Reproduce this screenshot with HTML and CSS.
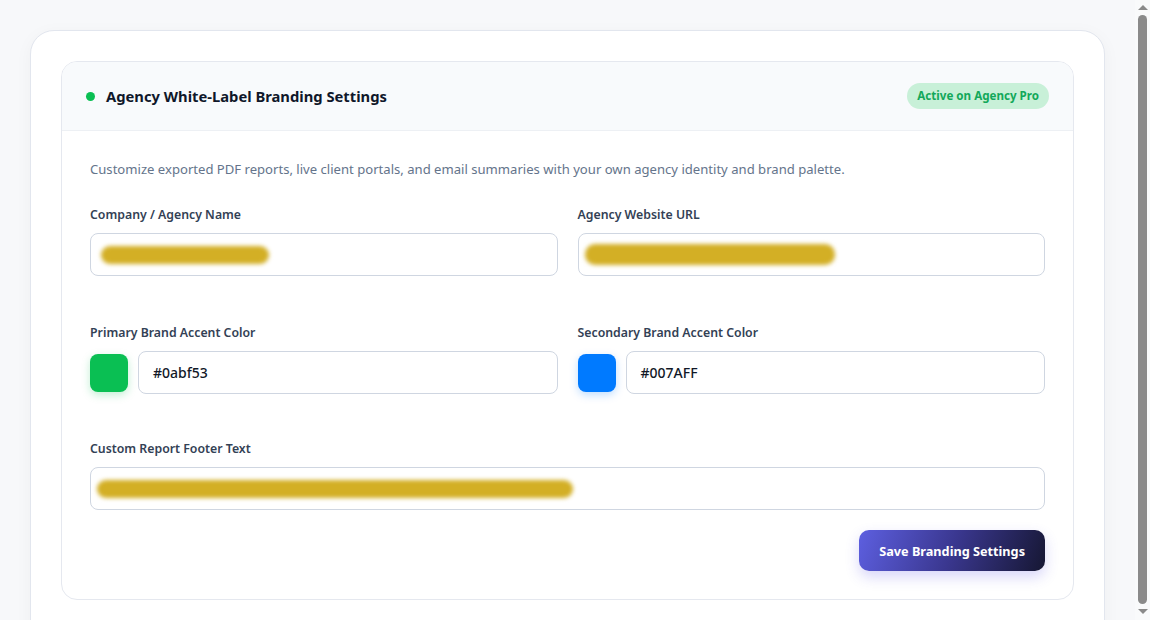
FILE: index.html
```html
<!DOCTYPE html>
<html lang="en">
<head>
    <meta charset="UTF-8">
    <meta name="viewport" content="width=device-width, initial-scale=1.0">
    <title>Agency Branding</title>
    <link rel="stylesheet" href="styles.css">
</head>
<body>
    <div class="page">
        <div class="panel">
            <div class="brandCard">
                <div class="cardHead">
                    <div class="headTitle">
                        <span class="dot"></span>
                        Agency White-Label Branding Settings
                    </div>
                    <span class="badge">Active on Agency Pro</span>
                </div>
                <div class="cardBody">
                    <p class="intro">Customize exported PDF reports, live client portals, and email summaries with your own agency identity and brand palette.</p>

                    <div class="grid">
                        <div class="field">
                            <label>Company / Agency Name</label>
                            <div class="inputBox"><span class="redact" style="width: 168px"></span></div>
                        </div>
                        <div class="field">
                            <label>Agency Website URL</label>
                            <div class="inputBox"><span class="redact wide" style="width: 250px"></span></div>
                        </div>

                        <div class="field">
                            <label>Primary Brand Accent Color</label>
                            <div class="colorRow">
                                <span class="swatch green"></span>
                                <div class="inputBox value">#0abf53</div>
                            </div>
                        </div>
                        <div class="field">
                            <label>Secondary Brand Accent Color</label>
                            <div class="colorRow">
                                <span class="swatch blue"></span>
                                <div class="inputBox value">#007AFF</div>
                            </div>
                        </div>

                        <div class="field full">
                            <label>Custom Report Footer Text</label>
                            <div class="inputBox footerBox"><span class="redact" style="width: 476px"></span></div>
                        </div>
                    </div>

                    <div class="actions">
                        <button class="saveBtn">Save Branding Settings</button>
                    </div>
                </div>
            </div>
        </div>
    </div>

    <!-- page scrollbar, drawn since the headless window hides it -->
    <div class="scrollbar">
        <span class="arrow up"></span>
        <span class="thumb"></span>
        <span class="arrow down"></span>
    </div>
</body>
</html>
```

FILE: styles.css
```css
body {
    margin: 0;
    background-color: #f7f8fa;
    font-family: 'Noto Sans', 'Open Sans', sans-serif;
    color: #1e293b;
}

.page {
    padding: 30px 45px 30px 30px;
}

.panel {
    background-color: #ffffff;
    border: 1px solid #e2e6ee;
    border-radius: 24px;
    padding: 30px 30px 60px 30px;
    box-shadow: 0 4px 18px rgba(15, 23, 42, 0.04);
}

.brandCard {
    border: 1px solid #e5e8ef;
    border-radius: 16px;
    overflow: hidden;
    background-color: #ffffff;
}

.cardHead {
    display: flex;
    align-items: center;
    justify-content: space-between;
    height: 68px;
    padding: 0 24px;
    background-color: #f8fafc;
    border-bottom: 1px solid #edf0f4;
}

.headTitle {
    display: flex;
    align-items: center;
    gap: 11px;
    font-size: 14.75px;
    font-weight: 700;
    color: #0f172a;
}

.dot {
    width: 9px;
    height: 9px;
    border-radius: 50%;
    background-color: #0abf53;
}

.badge {
    background-color: #c8f0d8;
    color: #12a85a;
    font-size: 11.6px;
    font-weight: 700;
    padding: 4px 10px;
    border-radius: 14px;
    line-height: 18px;
}

.cardBody {
    padding: 28px;
}

.intro {
    margin: 0 0 27px 0;
    font-size: 13.1px;
    line-height: 20px;
    color: #64748b;
}

.grid {
    display: grid;
    grid-template-columns: 1fr 1fr;
    column-gap: 20px;
    row-gap: 48px;
}

.field label {
    display: block;
    font-size: 12.3px;
    font-weight: 600;
    color: #334155;
    line-height: 18px;
    margin-bottom: 9px;
}

.full {
    grid-column: 1 / 3;
    margin-top: -2px;
}

.inputBox {
    box-sizing: border-box;
    height: 43px;
    border: 1px solid #cfd6e1;
    border-radius: 8px;
    background-color: #ffffff;
    display: flex;
    align-items: center;
    padding: 0 10px;
}

.value {
    flex: 1;
    padding-left: 14px;
    font-size: 14px;
    font-weight: 500;
    color: #111827;
}

.colorRow {
    display: flex;
    align-items: center;
    gap: 10px;
}

.swatch {
    width: 38px;
    height: 38px;
    border-radius: 8px;
    flex-shrink: 0;
}

.green {
    background-color: #0abf53;
    box-shadow: 0 3px 8px rgba(10, 191, 83, 0.25);
}

.blue {
    background-color: #007aff;
    box-shadow: 0 3px 8px rgba(0, 122, 255, 0.25);
}

.redact {
    display: block;
    height: 18px;
    border-radius: 10px;
    background-color: #d3af25;
    filter: blur(2px);
}

.wide {
    height: 21px;
    margin-left: -4px;
}

.footerBox {
    padding-left: 6px;
}

.actions {
    display: flex;
    justify-content: flex-end;
    margin-top: 20px;
}

.saveBtn {
    height: 41px;
    padding: 0 20px;
    border: none;
    border-radius: 10px;
    background: linear-gradient(110deg, #5d5fe0 0%, #3a378f 50%, #161733 100%);
    color: #ffffff;
    font-family: 'Noto Sans', 'Open Sans', sans-serif;
    font-size: 12.7px;
    font-weight: 700;
    box-shadow: 0 6px 14px rgba(79, 70, 229, 0.22);
}

.scrollbar {
    position: fixed;
    top: 0;
    right: 0;
    width: 15px;
    height: 100%;
    background-color: #f9fafb;
    display: flex;
    flex-direction: column;
    align-items: center;
}

.thumb {
    flex: 1;
    width: 9px;
    margin: 5px 0;
    border-radius: 5px;
    background-color: #8a8a8a;
}

.arrow {
    width: 0;
    height: 0;
    border-left: 5px solid transparent;
    border-right: 5px solid transparent;
}

.up {
    margin-top: 5px;
    border-bottom: 5px solid #8a8a8a;
}

.down {
    margin-bottom: 6px;
    border-top: 5px solid #8a8a8a;
}
```
